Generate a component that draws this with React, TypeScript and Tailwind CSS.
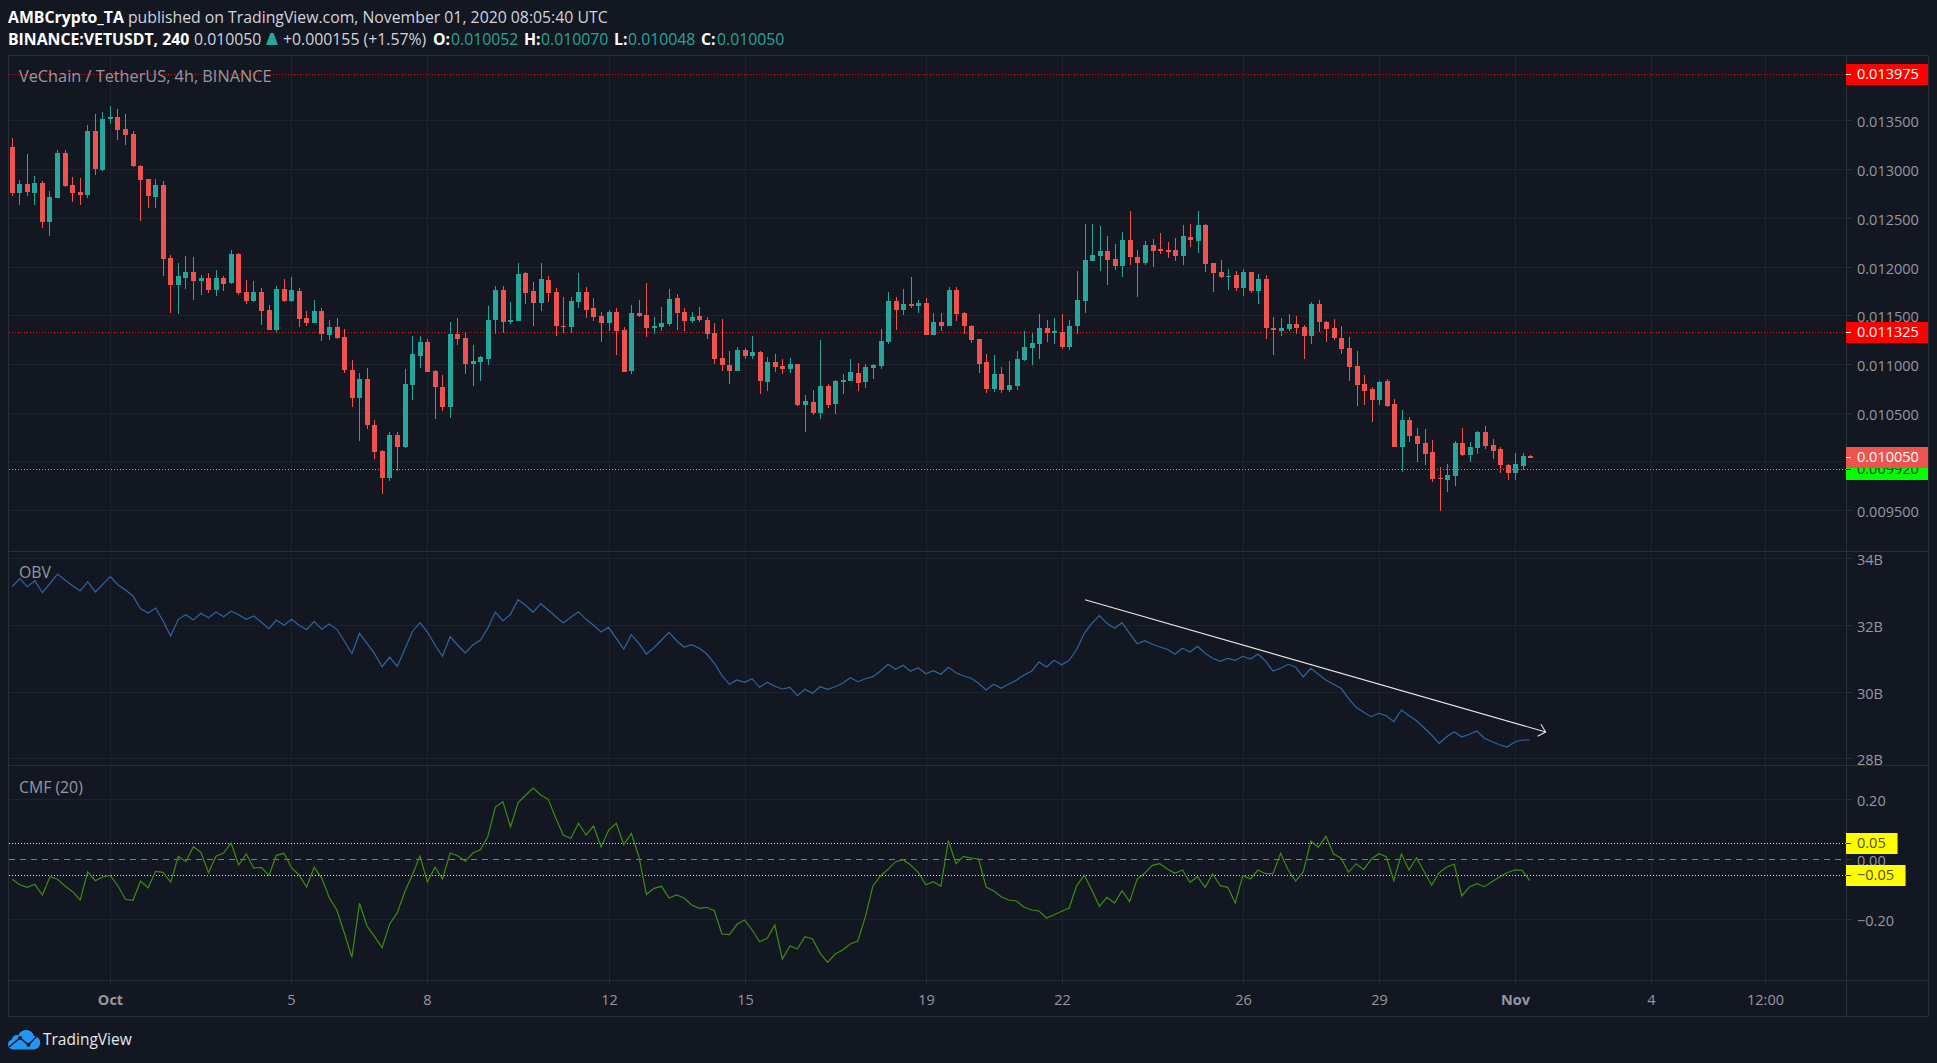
import React from "react";

/* ==== candles: [x, green?, wickTop, bodyTop, bodyBottom, wickBottom], y is 3x from baseY ==== */
type Bar = number[];
const segments: { baseX: number; baseY: number; bars: Bar[] }[] = [
  {
    baseX: 0,
    baseY: 100,
    bars: [
      [37,0,114,141,279,288],[58,1,240,252,279,315],[82,0,162,252,276,288],[103,1,228,249,279,315],
      [127,0,243,249,366,384],[148,1,273,291,366,408],[172,1,150,159,294,294],[196,0,150,159,258,261],
      [217,0,231,255,279,306],[241,0,234,276,285,315],[262,1,75,93,285,294],[286,0,42,93,207,225],
      [307,1,36,57,210,213],[331,1,18,51,57,72],[352,0,27,51,90,120],[376,0,42,87,105,135],
      [400,0,93,102,198,201],[421,0,195,198,240,363],[445,0,237,237,288,324],[466,1,237,255,291,324],
      [490,0,243,255,477,528],[511,0,465,474,555,639],[535,1,489,528,555,642],[556,1,468,516,534,567],
      [580,0,471,516,543,600],[604,1,525,534,543,585],[625,0,519,534,570,579],[649,1,510,534,570,588],
      [670,0,528,534,552,573],[694,1,450,462,549,552],[715,0,459,462,579,585],[739,0,540,576,603,612],
      [760,1,543,576,603,606],[784,0,564,576,633,675],[808,0,615,630,690,690],[829,1,558,567,690,696],
      [853,0,537,567,603,606],[874,1,531,570,603,606],[898,0,564,573,657,681],[919,0,633,654,669,678],
      [943,1,600,633,669,669],[964,0,624,633,702,723],[988,1,660,681,705,720],[1012,0,654,681,714,717],
      [1033,0,687,711,810,819],[1057,0,780,810,894,921],[1078,1,819,837,894,1023],[1102,0,804,837,975,987],
      [1123,0,960,975,1056,1077],[1147,0,1050,1053,1134,1182],[1168,1,996,1005,1134,1143],[1192,0,996,1005,1041,1113],
      [1216,1,807,852,1041,1044],[1237,1,708,762,855,900],[1261,1,708,726,768,804],[1282,0,717,726,816,816],
      [1306,0,810,813,861,957],[1327,0,825,861,921,933],[1351,1,666,702,921,954],[1372,0,654,702,717,735],
      [1396,0,696,714,792,822],[1420,1,735,783,792,858],
    ],
  },
  {
    baseX: 480,
    baseY: 240,
    bars: [
      [2,1,348,351,366,423],[25,1,198,240,357,375],[46,1,138,150,240,282],[70,0,138,150,246,279],
      [91,1,186,240,246,252],[115,1,69,102,243,243],[136,0,96,99,159,192],[160,0,126,153,189,258],
      [184,1,69,117,189,213],[205,0,108,120,159,186],[229,0,144,156,258,288],[250,0,171,258,261,279],
      [274,1,171,183,261,279],[295,1,99,156,186,204],[319,0,141,156,210,234],[340,0,174,204,231,243],
      [364,0,216,228,249,306],[388,1,210,216,249,273],[409,0,204,216,273,345],[433,0,261,270,396,396],
      [454,1,195,219,393,402],[478,0,180,219,228,231],[499,0,129,225,264,291],[523,1,231,258,264,282],
      [544,1,201,249,261,273],[568,1,147,177,252,258],[592,0,162,174,219,270],[613,0,204,216,243,273],
      [637,1,216,231,243,249],[658,0,201,228,240,246],[682,0,231,240,282,297],[703,0,249,279,357,372],
      [727,0,237,354,375,393],[748,0,333,375,393,432],[772,1,321,330,393,393],[796,0,324,330,348,357],
      [817,1,288,336,348,357],[841,0,333,336,423,462],[862,1,351,366,426,453],[886,0,342,366,381,396],
      [907,0,357,378,387,402],[931,1,354,372,387,399],[952,0,372,372,495,498],[976,1,465,483,495,576],
      [1000,0,450,486,519,525],[1021,1,300,438,519,537],[1045,0,432,438,495,504],[1066,1,420,423,492,522],
      [1090,1,402,420,426,462],[1111,1,357,396,423,423],[1135,0,369,399,429,453],[1156,1,372,381,426,444],
      [1180,1,372,375,384,417],[1204,1,267,303,378,387],[1225,1,156,183,306,312],[1249,0,171,183,210,270],
      [1270,1,147,192,210,225],[1294,0,111,192,198,204],[1315,1,180,189,198,219],[1339,0,174,189,285,285],
      [1360,1,219,246,285,285],[1384,0,219,246,258,273],[1408,1,141,150,258,258],[1429,0,141,150,222,243],
    ],
  },
  {
    baseX: 960,
    baseY: 200,
    bars: [
      [13,0,336,339,378,402],[34,0,375,378,420,429],[58,0,417,417,492,519],[79,0,462,486,567,579],
      [103,1,465,522,567,576],[124,0,501,522,570,579],[148,1,483,555,570,576],[172,1,453,477,558,570],
      [193,1,393,441,480,483],[217,1,399,429,444,495],[238,1,342,384,432,477],[262,0,360,384,399,426],
      [283,1,354,393,399,432],[307,0,342,396,441,447],[328,1,360,378,441,450],[352,1,213,300,378,402],
      [376,1,72,180,303,339],[397,1,72,165,183,183],[421,1,78,153,168,213],[442,0,108,153,180,255],
      [466,0,132,177,198,210],[487,1,96,120,198,231],[511,0,33,120,171,195],[532,0,150,171,189,291],
      [556,1,123,135,189,195],[580,0,117,135,153,201],[601,0,99,147,153,162],[625,0,126,150,156,174],
      [646,0,114,150,168,183],[670,1,75,108,168,195],[691,0,72,111,120,141],[715,1,33,75,123,159],
      [736,0,72,75,192,216],[760,0,189,189,219,276],[784,0,180,216,231,234],[805,1,207,228,231,270],
      [829,0,213,225,264,273],[850,1,207,216,264,288],[874,0,216,216,273,279],[895,1,222,237,273,312],
      [919,0,225,237,384,417],[940,0,351,384,390,465],[964,1,354,384,393,408],[988,1,342,372,387,393],
      [1009,0,348,372,384,402],[1033,0,375,381,408,477],[1054,1,306,312,408,432],[1078,0,300,312,366,396],
      [1099,0,363,366,387,426],[1123,0,357,384,414,420],[1144,0,378,414,447,462],[1168,0,411,444,501,543],
      [1192,0,453,498,555,618],
    ],
  },
  {
    baseX: 1300,
    baseY: 270,
    bars: [
      [193,0,315,342,363,405],[217,0,351,357,390,456],[238,1,333,336,390,405],[262,0,327,333,408,411],
      [283,0,387,402,531,531],[307,1,420,450,531,606],[328,0,441,450,498,516],[352,0,474,498,522,576],
      [376,0,477,519,552,585],[397,0,510,546,627,636],[421,0,591,624,627,723],[442,1,582,615,630,666],
      [466,1,513,519,618,648],[487,0,474,519,555,558],[511,1,516,531,555,576],[532,1,483,486,534,552],
      [556,0,468,486,528,537],[580,0,507,525,543,567],[601,0,531,537,585,609],[625,0,582,585,609,630],
      [646,1,549,582,609,630],[670,1,549,558,588,600],[691,0,555,558,564,564],
    ],
  },
];

/* ==== indicator lines, one value per candle, y is 3x from 550 ==== */
const obv = [
  110,86,110,92,128,100,72,90,107,123,95,126,103,80,104,120,138,176,189,174,214,258,208,194,210,190,203,186,200,184,
  194,208,198,217,236,210,226,208,226,239,214,238,222,238,274,311,250,280,311,350,322,349,298,245,218,246,285,319,260,285,
  309,285,271,235,186,213,193,149,166,187,161,180,200,219,202,185,208,226,246,232,265,297,254,280,
  312,293,270,247,272,291,284,295,312,340,376,403,390,397,386,412,397,409,417,412,437,418,430,410,418,410,400,383,395,386,
  380,363,343,358,346,364,353,371,362,373,352,368,378,385,400,420,403,415,402,391,375,364,336,351,331,344,331,298,250,220,
  197,220,235,218,250,281,272,283,291,298,313,295,306,289,310,325,334,325,331,319,327,312,333,363,355,
  343,352,381,355,373,390,403,415,445,472,487,500,490,497,515,480,497,512,533,555,580,560,545,561,553,543,565,575,584,591,576,570,570,
];
const cmf = [
  988,1004,1012,1003,1035,980,988,1008,1025,1050,965,992,981,976,1008,1048,1051,993,1013,964,967,997,919,935,890,907,968,919,909,879,
  945,912,954,952,977,916,910,953,975,1011,952,985,1043,1080,1150,1222,1060,1128,1160,1193,1122,1088,1025,975,918,996,952,987,909,917,
  934,909,899,860,771,755,831,758,736,714,735,748,805,856,865,820,855,828,891,841,820,884,850,920,
  1033,1015,1009,1044,1035,1044,1065,1075,1072,1082,1152,1154,1123,1110,1140,1175,1165,1125,1227,1188,1196,1160,1167,1210,1237,1212,1200,1182,1173,1100,
  1008,978,958,935,929,945,967,1004,995,1009,872,941,919,924,927,1011,1023,1040,1050,1053,1071,1080,1083,1104,1094,1084,1074,1006,976,1020,
  1069,1042,1059,1022,1055,987,970,946,941,957,970,960,997,980,1012,972,1007,1012,1059,977,987,960,971,971,
  910,960,993,965,873,892,859,912,924,967,941,959,928,911,920,992,912,960,923,964,1005,968,951,943,1038,1011,1001,1010,995,981,968,960,961,992,
];

const xOf = (i: number) => 12.2 + 7.55 * i;
const toPoints = (vals: number[]) =>
  vals.map((v, i) => `${xOf(i).toFixed(1)},${(550 + v / 3).toFixed(1)}`).join(" ");

const vGrid = [110, 291, 427, 609, 745, 926, 1062, 1243, 1379, 1515, 1651, 1765];

const GridLines = ({ ys, top, bottom }: { ys: number[]; top: number; bottom: number }) => (
  <g stroke="#1e222d" strokeWidth="1" shapeRendering="crispEdges">
    {vGrid.map((x) => (
      <line key={x} x1={x + 0.5} x2={x + 0.5} y1={top} y2={bottom} />
    ))}
    {ys.map((y) => (
      <line key={y} x1="9" x2="1846" y1={y + 0.5} y2={y + 0.5} />
    ))}
  </g>
);

const Candles = () => (
  <g shapeRendering="crispEdges">
    {segments.map((s) =>
      s.bars.map(([u, up, wt, bt, bb, wb]) => {
        const x = Math.floor(s.baseX + u / 3);
        const fill = up ? "#26a69a" : "#ef5350";
        return (
          <g key={`${s.baseX}-${u}`} fill={fill}>
            <rect x={x} y={s.baseY + wt / 3} width="1" height={(wb - wt) / 3 || 1} />
            <rect x={x - 2} y={s.baseY + bt / 3} width="5" height={Math.max((bb - bt) / 3, 1)} />
          </g>
        );
      })
    )}
  </g>
);

const DotLine = ({ y, color }: { y: number; color: string }) => (
  <line
    x1="9"
    x2="1846"
    y1={y + 0.5}
    y2={y + 0.5}
    stroke={color}
    strokeWidth="1"
    strokeDasharray="1 2"
    shapeRendering="crispEdges"
  />
);

/* ==== price scale helpers ==== */
const Tick = ({ y, text }: { y: number; text: string }) => (
  <>
    <div className="absolute left-0 h-px w-[5px] bg-[#2a2e39]" style={{ top: y }} />
    <span
      className="absolute left-[10px] text-[14.5px] leading-[20px] text-[#9598a1]"
      style={{ top: y - 8.5 }}
    >
      {text}
    </span>
  </>
);

const Tag = ({
  y,
  text,
  className,
  textClass,
  tickClass,
}: {
  y: number;
  text: string;
  className: string;
  textClass: string;
  tickClass: string;
}) => (
  <div className={`absolute left-[-1px] h-[21px] ${className}`} style={{ top: y - 10 }}>
    <div className={`absolute left-0 top-[10px] h-px w-[5px] ${tickClass}`} />
    <span className={`absolute left-[11px] top-0 text-[14.5px] leading-[20px] ${textClass}`}>{text}</span>
  </div>
);

const Legend = ({ text, className }: { text: string; className: string }) => (
  <span className={`absolute left-[10px] leading-[20px] text-[#9598a1] ${className}`}>{text}</span>
);

const Logo = () => (
  <svg width="33" height="20" viewBox="0 0 33 20">
    <path
      d="M5 19.5C2 19.5 0 17.3 0 14.6 0 12 1.6 10.2 3.8 9.5 4.4 6.6 7.2 4.6 10.3 5.2 11.6 2.2 14.4 0 18 0c4 0 7.2 2.6 8 6.2 3.4 0 6.2 2.6 6.2 6.4 0 3.8-2.8 6.9-6.6 6.9H5z"
      fill="#2196f3"
    />
    <polyline points="1,17 12,8 20.5,14.8 29,6" fill="none" stroke="#131722" strokeWidth="1.4" />
    <circle cx="12" cy="8" r="2" fill="#131722" />
    <circle cx="20.5" cy="14.8" r="2" fill="#131722" />
  </svg>
);

const TimeLabel = ({ x, text, bold }: { x: number; text: string; bold?: boolean }) => (
  <>
    <div className="absolute top-0 h-[4px] w-px bg-[#2a2e39]" style={{ left: x - 9 }} />
    <span
      className={`absolute top-[9px] -translate-x-1/2 text-[14.5px] leading-[20px] text-[#9598a1] ${
        bold ? "font-bold" : ""
      }`}
      style={{ left: x - 8.5 }}
    >
      {text}
    </span>
  </>
);

export default function App() {
  return (
    <div className="flex h-[1063px] w-[1937px] flex-col overflow-hidden bg-[#131722] font-['Open_Sans',sans-serif] text-[#d1d4dc]">
      {/* header */}
      <div className="h-[55px] shrink-0 pl-2 pt-[6px] text-[15.8px] leading-[22px] whitespace-nowrap">
        <div>
          <b className="text-white">AMBCrypto_TA</b> published on TradingView.com, November 01, 2020 08:05:40 UTC
        </div>
        <div className="flex items-center">
          <b className="w-[186px] text-white">BINANCE:VETUSDT, 240</b>
          <span className="w-[72px]">0.010050</span>
          <svg width="12" height="12" viewBox="0 0 12 12" className="mr-[5px]">
            <path d="M4.5 0h3L12 12H0z" fill="#26a69a" />
          </svg>
          <span className="w-[150px]">+0.000155 (+1.57%)</span>
          <b className="w-[18px] text-white">O:</b>
          <span className="w-[73px] text-[#26a69a]">0.010052</span>
          <b className="w-[17px] text-white">H:</b>
          <span className="w-[73px] text-[#26a69a]">0.010070</span>
          <b className="w-[14px] text-white">L:</b>
          <span className="w-[73px] text-[#26a69a]">0.010048</span>
          <b className="w-[16px] text-white">C:</b>
          <span className="text-[#26a69a]">0.010050</span>
        </div>
      </div>

      {/* chart frame */}
      <div className="ml-2 flex h-[962px] w-[1921px] shrink-0 flex-col border border-[#2a2e39]">
        {/* price pane */}
        <div className="flex h-[496px] shrink-0 border-b border-[#2a2e39]">
          <div className="relative h-full w-[1837px] shrink-0">
            <svg width="1837" height="495" viewBox="9 56 1837 495" className="block">
              <GridLines ys={[120, 169, 218, 267, 315, 364, 413, 461, 510]} top={56} bottom={551} />
              <DotLine y={74} color="#ff0000" />
              <DotLine y={332} color="#ff0000" />
              <DotLine y={469} color="#00ff00" />
              <Candles />
            </svg>
            <Legend text="VeChain / TetherUS, 4h, BINANCE" className="top-[10px] text-[16.3px]" />
          </div>
          <div className="relative flex-1 border-l border-[#2a2e39]">
            <Tick y={64} text="0.013500" />
            <Tick y={113} text="0.013000" />
            <Tick y={162} text="0.012500" />
            <Tick y={211} text="0.012000" />
            <Tick y={259} text="0.011500" />
            <Tick y={308} text="0.011000" />
            <Tick y={357} text="0.010500" />
            <Tick y={454} text="0.009500" />
            <Tag y={18} text="0.013975" className="w-[82px] bg-[#ff0000]" textClass="text-white" tickClass="bg-white" />
            <Tag y={276} text="0.011325" className="w-[82px] bg-[#ff0000]" textClass="text-white" tickClass="bg-white" />
            <Tag y={413} text="0.009920" className="w-[82px] bg-[#00ff00]" textClass="text-[#0b3d0b]" tickClass="bg-black" />
            <Tag y={401} text="0.010050" className="w-[82px] bg-[#ef5350]" textClass="text-white" tickClass="bg-white" />
          </div>
        </div>

        {/* OBV pane */}
        <div className="flex h-[214px] shrink-0 border-b border-[#2a2e39]">
          <div className="relative h-full w-[1837px] shrink-0">
            <svg width="1837" height="213" viewBox="9 552 1837 213" className="block">
              <GridLines ys={[558, 625, 692, 758]} top={552} bottom={765} />
              <polyline points={toPoints(obv)} fill="none" stroke="#2f659f" strokeWidth="1.2" />
              <g fill="none" stroke="#e6e6e6" strokeWidth="1.1">
                <line x1="1085" y1="599.7" x2="1545.6" y2="732" />
                <polyline points="1541,724.3 1545.6,732 1537.6,736.3" />
              </g>
            </svg>
            <Legend text="OBV" className="top-[10px] text-[15.8px]" />
          </div>
          <div className="relative flex-1 border-l border-[#2a2e39]">
            <Tick y={6} text="34B" />
            <Tick y={73} text="32B" />
            <Tick y={140} text="30B" />
            <Tick y={206} text="28B" />
          </div>
        </div>

        {/* CMF pane */}
        <div className="flex h-[215px] shrink-0 border-b border-[#2a2e39]">
          <div className="relative h-full w-[1837px] shrink-0">
            <svg width="1837" height="214" viewBox="9 766 1837 214" className="block">
              <GridLines ys={[799, 919]} top={766} bottom={980} />
              <DotLine y={843} color="#ffff00" />
              <line
                x1="9"
                x2="1846"
                y1="859.5"
                y2="859.5"
                stroke="#787b86"
                strokeDasharray="6 5"
                shapeRendering="crispEdges"
              />
              <DotLine y={875} color="#ffff00" />
              <polyline points={toPoints(cmf)} fill="none" stroke="#3b8c10" strokeWidth="1.2" />
            </svg>
            <Legend text="CMF (20)" className="top-[11px] text-[15.8px]" />
          </div>
          <div className="relative flex-1 border-l border-[#2a2e39]">
            <Tick y={33} text="0.20" />
            <Tick y={93} text="0.00" />
            <Tick y={153} text="−0.20" />
            <Tag
              y={77}
              text="0.05"
              className="w-[52px] border-r border-[#8f8f10] bg-[#ffff00]"
              textClass="text-[#4d4d1f]"
              tickClass="bg-[#222]"
            />
            <Tag
              y={109}
              text="−0.05"
              className="w-[60px] border-r border-[#8f8f10] bg-[#ffff00]"
              textClass="text-[#4d4d1f]"
              tickClass="bg-[#222]"
            />
          </div>
        </div>

        {/* time axis */}
        <div className="flex flex-1">
          <div className="relative h-full w-[1837px] shrink-0">
            <TimeLabel x={110} text="Oct" bold />
            <TimeLabel x={291} text="5" />
            <TimeLabel x={427} text="8" />
            <TimeLabel x={609} text="12" />
            <TimeLabel x={745} text="15" />
            <TimeLabel x={926} text="19" />
            <TimeLabel x={1062} text="22" />
            <TimeLabel x={1243} text="26" />
            <TimeLabel x={1379} text="29" />
            <TimeLabel x={1515} text="Nov" bold />
            <TimeLabel x={1651} text="4" />
            <TimeLabel x={1765} text="12:00" />
          </div>
          <div className="flex-1 border-l border-[#2a2e39]" />
        </div>
      </div>

      {/* footer */}
      <div className="flex flex-1 items-center gap-[2px] pl-2">
        <Logo />
        <span className="text-[15.5px] text-[#e6e8ee]">TradingView</span>
      </div>
    </div>
  );
}
